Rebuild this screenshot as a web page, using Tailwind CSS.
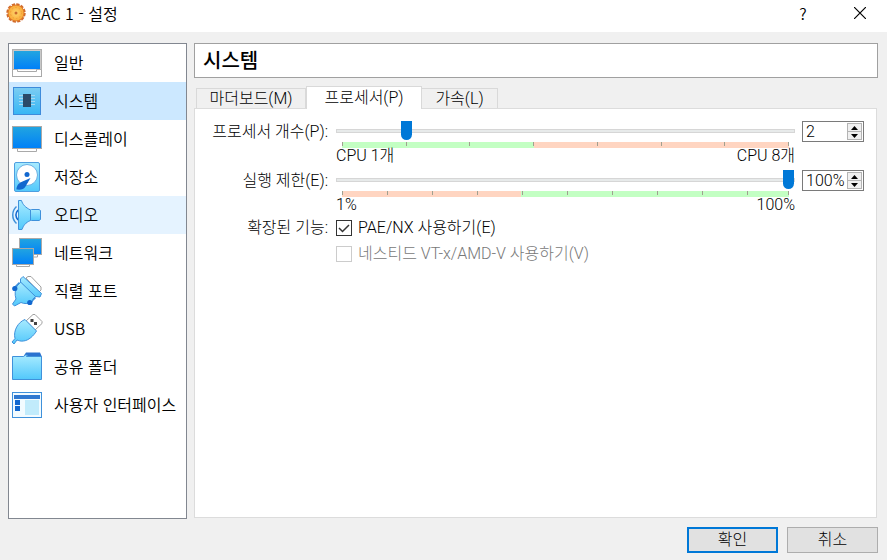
<!DOCTYPE html>
<html lang="ko">
<head>
    <meta charset="UTF-8">
    <meta name="viewport" content="width=device-width, initial-scale=1.0">
    <title>RAC 1 - 설정</title>
    <script src="https://cdn.jsdelivr.net/npm/@tailwindcss/browser@4"></script>
</head>
<body class="flex h-screen flex-col bg-[#f0f0f0] font-['Roboto','Noto_Sans_CJK_KR',sans-serif] text-base font-light leading-5 text-black">
    <svg class="absolute h-0 w-0" aria-hidden="true">
        <defs>
            <linearGradient id="screen" x1="0" y1="0" x2="0" y2="1"><stop offset="0" stop-color="#22a5e0"/><stop offset="1" stop-color="#0080f8"/></linearGradient>
            <linearGradient id="sky" x1="0" y1="0" x2="0" y2="1"><stop offset="0" stop-color="#a8ebff"/><stop offset="1" stop-color="#52c8fb"/></linearGradient>
            <linearGradient id="chip" x1="0" y1="0" x2="0" y2="1"><stop offset="0" stop-color="#7ccdf2"/><stop offset="1" stop-color="#36b6f5"/></linearGradient>
            <radialGradient id="gear"><stop offset="0" stop-color="#ffd76e"/><stop offset="1" stop-color="#f9a935"/></radialGradient>
        </defs>
    </svg>

    <header class="flex h-8 shrink-0 items-center bg-white pl-1.5 font-['Noto_Sans_CJK_KR',sans-serif] font-[350]">
        <svg class="-mt-1.5 h-5 w-5" viewBox="0 0 20 20">
            <circle cx="10" cy="10" r="8.500" fill="none" stroke="#d06a2c" stroke-width="2.400" stroke-dasharray="3.200 1.250"/>
            <circle cx="10" cy="10" r="8" fill="url(#gear)" stroke="#e07b2a"/>
            <circle cx="10" cy="10" r="5.500" fill="none" stroke="#f29b38" stroke-dasharray="1.500 2"/>
            <circle cx="10" cy="10" r="1.500" fill="#c9682c"/>
        </svg>
        <h1 class="-mt-1.5 ml-[5px]">RAC 1 - 설정</h1>
        <button class="-mt-1.5 ml-auto w-12" aria-label="도움말">?</button>
        <button class="-mt-1.5 ml-1 flex h-8 w-14 items-center justify-center" aria-label="닫기">
            <svg class="ml-0.5 h-3 w-3" viewBox="0 0 12 12"><path d="M0 0l12 12M12 0L0 12" stroke="#000" stroke-width="1.200"/></svg>
        </button>
    </header>

    <div class="flex min-h-0 flex-1 gap-[7px] pt-[11px] pr-[9px] pl-2">
        <nav class="w-[179px] shrink-0 border border-[#828790] bg-white font-['Noto_Sans_CJK_KR',sans-serif] font-[350]">
            <a href="#" class="flex h-[38px] items-center gap-[11px] pl-0.5">
                <svg class="h-8 w-8" viewBox="0 0 32 32">
                    <rect x="1.500" y="2.500" width="29" height="27" fill="#fff" stroke="#a9a9a9"/>
                    <rect x="1.500" y="2.500" width="29" height="20" fill="#c9c9c9" stroke="#b0b0b0"/>
                    <rect x="3" y="4" width="26" height="18" fill="url(#screen)"/>
                    <path d="M6.500 22.500v2H25.500v-2" fill="#fff" stroke="#a9a9a9"/>
                </svg>
                <span class="pb-0.5">일반</span>
            </a>
            <a href="#" aria-current="page" class="flex h-[38px] items-center gap-[11px] bg-[#cce8ff] pl-0.5">
                <svg class="h-8 w-8" viewBox="0 0 32 32">
                    <rect x="2.500" y="2.500" width="27" height="27" fill="url(#chip)" stroke="#3d8bdb"/>
                    <path d="M8 10.500h16M8 13.500h16M8 16.500h16M8 19.500h16" stroke="#a5d8f1"/>
                    <rect x="12" y="9" width="8" height="13" fill="#2b4a68"/>
                </svg>
                <span class="pb-0.5">시스템</span>
            </a>
            <a href="#" class="flex h-[38px] items-center gap-[11px] pl-0.5">
                <svg class="h-8 w-8" viewBox="0 0 32 32">
                    <path d="M6.500 25v3.500h19V25" fill="#fff" stroke="#a9a9a9"/>
                    <rect x="1.500" y="3.500" width="29" height="22" fill="url(#screen)" stroke="#a9a9a9"/>
                </svg>
                <span class="pb-0.5">디스플레이</span>
            </a>
            <a href="#" class="flex h-[38px] items-center gap-[11px] pl-0.5">
                <svg class="h-8 w-8" viewBox="0 0 32 32">
                    <rect x="3.500" y="1.500" width="25" height="29" rx="1.500" fill="url(#sky)" stroke="#4e9fe0"/>
                    <circle cx="16" cy="14" r="10.500" fill="#fff" stroke="#6ab0e4"/>
                    <circle cx="16" cy="13.500" r="2.500" fill="#1268cf"/>
                    <path d="M5.500 27c1-4 3-5 6-6.500l8-3.500-5 8.500c-1.500 3-5 3.500-9 3z" fill="#1268cf"/>
                </svg>
                <span class="pb-0.5">저장소</span>
            </a>
            <a href="#" class="flex h-[38px] items-center gap-[11px] bg-[#e5f3ff] pl-0.5">
                <svg class="h-8 w-8" viewBox="0 0 32 32" fill="none" stroke="#3f91db">
                    <path d="M5.500 7.500C.5 12 .5 20 5.500 24.500" stroke-width="1.500"/>
                    <path d="M7 11c-2.500 3-2.500 7 0 10" stroke="#1268cf" stroke-width="1.500"/>
                    <path d="M18.500 11.500l2-1h7.500l1.500 1v9l-1.500 1h-7.500l-2-1z" fill="url(#sky)"/>
                    <path d="M7.500 1.500h3c1 4 4 7 9 9.500v10.500c-5 2-7 5-8.500 9H7.500z" fill="url(#sky)"/>
                </svg>
                <span class="pb-0.5">오디오</span>
            </a>
            <a href="#" class="flex h-[38px] items-center gap-[11px] pl-0.5">
                <svg class="h-8 w-8" viewBox="0 0 32 32" stroke="#a9a9a9">
                    <path d="M22.500 17v3h4v-3" fill="#fff"/>
                    <rect x="8.500" y="1.500" width="22" height="16" fill="url(#screen)"/>
                    <path d="M5.500 27v2.500h13V27" fill="#fff"/>
                    <rect x="1.500" y="11.500" width="21" height="16" fill="url(#screen)"/>
                </svg>
                <span class="pb-0.5">네트워크</span>
            </a>
            <a href="#" class="flex h-[38px] items-center gap-[11px] pl-0.5">
                <svg class="h-8 w-8" viewBox="0 0 32 32" stroke-linejoin="round">
                    <path d="M15 3l2-1.500h3l10 10.500v3l-2 2z" fill="#fff" stroke="#a0a0a0"/>
                    <path d="M4 13l5-5M19 27l5-5" stroke="#3f91db" stroke-width="3"/>
                    <path d="M10 7l15 14-3 3-1 3c-4 2-8 2-11 .5l-6.500 3.500-2-2 3.500-5C3.500 19 4 15 6 11z" fill="url(#sky)" stroke="#3f91db"/>
                    <path d="M9.500 4l2.500-2.500 18.500 17-1.500 3.500-4.500-.5L9.500 7z" fill="url(#sky)" stroke="#3f91db"/>
                    <circle cx="3.800" cy="13.500" r="2.600" fill="#1268cf"/>
                    <circle cx="18.800" cy="27.500" r="2.600" fill="#1268cf"/>
                </svg>
                <span class="pb-0.5">직렬 포트</span>
            </a>
            <a href="#" class="flex h-[38px] items-center gap-[11px] pl-0.5">
                <svg class="h-8 w-8" viewBox="0 0 32 32" stroke-linejoin="round">
                    <path d="M15 8l7-6.500h2l7 7v2L24 17z" fill="#fff" stroke="#a0a0a0"/>
                    <path d="M19.500 6h3v3h-3zM23 9h3v3h-3z" fill="#444"/>
                    <path d="M14 6.500L25.500 18c-3 5-8 9.500-13 10-3 .5-5-.5-6.500-1l-3 4-2-2 3-3.500C2 18 7 9 14 6.500z" fill="url(#sky)" stroke="#3f91db"/>
                </svg>
                <span class="pb-0.5">USB</span>
            </a>
            <a href="#" class="flex h-[38px] items-center gap-[11px] pl-0.5">
                <svg class="h-8 w-8" viewBox="0 0 32 32">
                    <path d="M12 6l3-4.500h14L31 6z" fill="#2a72cf"/>
                    <path d="M1.500 5.500h11l2-1.500h2l-1 1.500h15v23h-29z" fill="url(#sky)" stroke="#3f91db"/>
                </svg>
                <span class="pb-0.5">공유 폴더</span>
            </a>
            <a href="#" class="flex h-[38px] items-center gap-[11px] pl-0.5">
                <svg class="h-8 w-8" viewBox="0 0 32 32">
                    <rect x="1.500" y="3.500" width="29" height="25" fill="#f2fbff" stroke="#3f91db"/>
                    <rect x="3" y="6" width="26" height="4" fill="#2f78d0"/>
                    <rect x="4" y="11" width="5" height="5" fill="#1268cf"/>
                    <rect x="4" y="17" width="5" height="5" fill="#1268cf"/>
                    <rect x="14" y="11" width="14" height="15" fill="#c1ebfb"/>
                </svg>
                <span class="pb-0.5">사용자 인터페이스</span>
            </a>
        </nav>

        <main class="flex min-w-0 flex-1 flex-col">
            <h2 class="flex h-[35px] shrink-0 items-center border border-[#a0a0a0] bg-white pl-2 text-xl font-medium">시스템</h2>

            <div role="tablist" class="relative mt-2.5 flex items-end pl-0.5">
                <button role="tab" class="h-5 w-[110px] border border-b-0 border-[#d9d9d9]">마더보드(M)</button>
                <button role="tab" aria-selected="true" class="-mt-0.5 -mb-px h-[23px] w-[116px] border border-b-0 border-[#d9d9d9] bg-white">프로세서(P)</button>
                <button role="tab" class="h-5 w-[76px] border border-b-0 border-l-0 border-[#d9d9d9]">가속(L)</button>
            </div>

            <section class="mr-px mb-px flex-1 border border-[#dcdcdc] bg-white p-3">
                <div class="grid grid-cols-[121px_1fr_62px] gap-x-2">
                    <label for="cpu" class="h-[49px] text-right leading-[22px] whitespace-nowrap">프로세서 개수(P):</label>
                    <div class="-mr-px">
                        <input id="cpu" type="range" min="1" max="8" value="2" class="block h-[19px] w-full appearance-none bg-transparent [&::-webkit-slider-runnable-track]:h-1 [&::-webkit-slider-runnable-track]:border [&::-webkit-slider-runnable-track]:border-[#d6d6d6] [&::-webkit-slider-runnable-track]:bg-[#e7eaea] [&::-webkit-slider-thumb]:-mt-[9px] [&::-webkit-slider-thumb]:h-[19px] [&::-webkit-slider-thumb]:w-[11px] [&::-webkit-slider-thumb]:appearance-none [&::-webkit-slider-thumb]:rounded-b-full [&::-webkit-slider-thumb]:bg-[#0078d7]">
                        <div class="mx-1.5 mt-0.5 flex h-1.5 bg-linear-to-r from-[#c3ffc3] from-43% to-[#ffd5c1] to-43%">
                            <i class="h-1 grow border-l border-[#a0a090]"></i>
                            <i class="h-1 grow border-l border-[#a0a090]"></i>
                            <i class="h-1 grow border-l border-[#a0a090]"></i>
                            <i class="h-1 grow border-l border-[#a0a090]"></i>
                            <i class="h-1 grow border-l border-[#a0a090]"></i>
                            <i class="h-1 grow border-l border-[#a0a090]"></i>
                            <i class="h-1 grow border-x border-[#a0a090]"></i>
                        </div>
                        <div class="flex justify-between leading-4"><span>CPU 1개</span><span>CPU 8개</span></div>
                    </div>
                    <div class="flex h-[21px] border border-[#7a7a7a] bg-white p-px">
                        <input type="text" value="2" aria-label="프로세서 개수" class="w-0 min-w-0 flex-1 pl-0.5 outline-none">
                        <div class="flex w-[15px] flex-col">
                            <button class="flex flex-1 items-center justify-center border border-[#b4b4b4] bg-[#f0f0f0]" aria-label="증가"><svg class="h-1 w-[7px]" viewBox="0 0 7 4"><path d="M0 4L3.500 0 7 4z"/></svg></button>
                            <button class="flex flex-1 items-center justify-center border border-t-0 border-[#b4b4b4] bg-[#f0f0f0]" aria-label="감소"><svg class="h-1 w-[7px]" viewBox="0 0 7 4"><path d="M0 0h7L3.500 4z"/></svg></button>
                        </div>
                    </div>

                    <label for="cap" class="h-12 text-right leading-[22px] whitespace-nowrap">실행 제한(E):</label>
                    <div class="-mr-px">
                        <input id="cap" type="range" min="1" max="100" value="100" class="block h-[19px] w-full appearance-none bg-transparent [&::-webkit-slider-runnable-track]:h-1 [&::-webkit-slider-runnable-track]:border [&::-webkit-slider-runnable-track]:border-[#d6d6d6] [&::-webkit-slider-runnable-track]:bg-[#e7eaea] [&::-webkit-slider-thumb]:-mt-[9px] [&::-webkit-slider-thumb]:h-[19px] [&::-webkit-slider-thumb]:w-[11px] [&::-webkit-slider-thumb]:appearance-none [&::-webkit-slider-thumb]:rounded-b-full [&::-webkit-slider-thumb]:bg-[#0078d7]">
                        <div class="mx-1.5 mt-0.5 flex h-1.5 bg-linear-to-r from-[#ffd5c1] from-40% to-[#c3ffc3] to-40%">
                            <i class="h-1 grow-10 border-l border-[#a0a090]"></i>
                            <i class="h-1 grow-10 border-l border-[#a0a090]"></i>
                            <i class="h-1 grow-10 border-l border-[#a0a090]"></i>
                            <i class="h-1 grow-10 border-l border-[#a0a090]"></i>
                            <i class="h-1 grow-10 border-l border-[#a0a090]"></i>
                            <i class="h-1 grow-10 border-l border-[#a0a090]"></i>
                            <i class="h-1 grow-10 border-l border-[#a0a090]"></i>
                            <i class="h-1 grow-10 border-l border-[#a0a090]"></i>
                            <i class="h-1 grow-10 border-l border-[#a0a090]"></i>
                            <i class="h-1 grow-9 border-x border-[#a0a090]"></i>
                        </div>
                        <div class="flex justify-between leading-4"><span>1%</span><span>100%</span></div>
                    </div>
                    <div class="flex h-[21px] border border-[#7a7a7a] bg-white p-px">
                        <input type="text" value="100%" aria-label="실행 제한" class="w-0 min-w-0 flex-1 pl-0.5 outline-none">
                        <div class="flex w-[15px] flex-col">
                            <button class="flex flex-1 items-center justify-center border border-[#b4b4b4] bg-[#f0f0f0]" aria-label="증가"><svg class="h-1 w-[7px]" viewBox="0 0 7 4"><path d="M0 4L3.500 0 7 4z"/></svg></button>
                            <button class="flex flex-1 items-center justify-center border border-t-0 border-[#b4b4b4] bg-[#f0f0f0]" aria-label="감소"><svg class="h-1 w-[7px]" viewBox="0 0 7 4"><path d="M0 0h7L3.500 4z"/></svg></button>
                        </div>
                    </div>

                    <span class="text-right whitespace-nowrap">확장된 기능:</span>
                    <div class="col-span-2 flex flex-col items-start gap-1.5">
                        <label class="flex items-center gap-1.5">
                            <span class="grid">
                                <input type="checkbox" checked class="peer col-start-1 row-start-1 h-4 w-4 appearance-none border border-[#333] bg-white">
                                <svg class="pointer-events-none invisible col-start-1 row-start-1 h-4 w-4 peer-checked:visible" viewBox="0 0 16 16"><path d="M3 8l3.500 3.500L13 5" fill="none" stroke="#333" stroke-width="1.500"/></svg>
                            </span>
                            PAE/NX 사용하기(E)
                        </label>
                        <label class="flex items-center gap-1.5 text-[#787878]">
                            <input type="checkbox" disabled class="h-4 w-4 appearance-none border border-[#ccc] bg-white">
                            네스티드 VT-x/AMD-V 사용하기(V)
                        </label>
                    </div>
                </div>
            </section>
        </main>
    </div>

    <footer class="flex shrink-0 justify-end gap-[9px] px-[9px] pt-2 pb-[7px]">
        <button class="h-[26px] w-[91px] border-2 border-[#0078d7] bg-[#e1e1e1]">확인</button>
        <button class="h-[26px] w-[91px] border border-[#adadad] bg-[#e1e1e1]">취소</button>
    </footer>
</body>
</html>
